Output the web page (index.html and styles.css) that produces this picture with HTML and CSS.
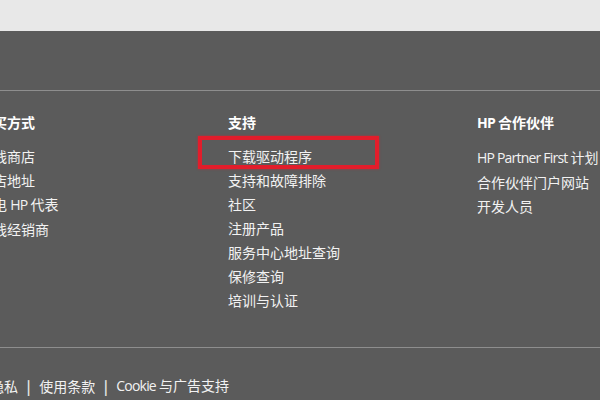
FILE: index.html
```html
<!DOCTYPE html>
<html lang="zh-CN">
<head>
<meta charset="utf-8">
<link rel="stylesheet" href="styles.css">
</head>
<body>
<div class="topband"></div>
<footer class="footer">
  <div class="cols">
    <div class="col">
      <h3 class="head">购买方式</h3>
      <ul class="list">
        <li>在线商店</li>
        <li>门店地址</li>
        <li>致电 <span class="lat">HP</span> 代表</li>
        <li>在线经销商</li>
      </ul>
    </div>
    <div class="col">
      <h3 class="head">支持</h3>
      <ul class="list">
        <li class="marked">下载驱动程序</li>
        <li>支持和故障排除</li>
        <li>社区</li>
        <li>注册产品</li>
        <li>服务中心地址查询</li>
        <li>保修查询</li>
        <li>培训与认证</li>
      </ul>
    </div>
    <div class="col">
      <h3 class="head"><span class="lat">HP</span> 合作伙伴</h3>
      <ul class="list">
        <li><span class="lat">HP Partner First</span> 计划</li>
        <li>合作伙伴门户网站</li>
        <li>开发人员</li>
      </ul>
    </div>
  </div>
  <div class="legal">
    <span>隐私</span><span class="sep">|</span><span>使用条款</span><span class="sep">|</span><span><span class="lat">Cookie</span> 与广告支持</span>
  </div>
</footer>
</body>
</html>
```
FILE: styles.css
```css
html, body {
  margin: 0;
  padding: 0;
  background: #5b5b5b;
  overflow: hidden;
}
body {
  width: 600px;
  height: 400px;
  font-family: "Noto Sans CJK SC", "Lato", sans-serif;
  color: #f2f2f2;
  font-size: 14px;
}
.topband {
  height: 31px;
  background: #e8e8e8;
}
.footer {
  padding-top: 59px;
}
.cols {
  border-top: 1px solid #8e8e8e;
  display: flex;
  margin-left: -21px;
  padding-top: 19px;
  padding-bottom: 35px;
  border-bottom: 1px solid #8e8e8e;
  width: 621px;
}
.col {
  width: 249px;
  flex: none;
}
.head {
  margin: 0;
  font-size: 14px;
  font-weight: bold;
  line-height: 24px;
  color: #ffffff;
  white-space: nowrap;
}
.list {
  list-style: none;
  margin: 10px 0 0;
  padding: 0;
}
.list li {
  line-height: 24px;
  white-space: nowrap;
}
.lat {
  font-family: "Open Sans", sans-serif;
  letter-spacing: -0.8px;
}
.head .lat {
  letter-spacing: -0.8px;
}
.marked {
  position: relative;
}
.marked::after {
  content: "";
  position: absolute;
  left: -30px;
  top: -8px;
  width: 173px;
  height: 25px;
  border: 4px solid #e21d2b;
  box-shadow: 0 0 2px rgba(226, 29, 43, 0.7);
}
.legal {
  display: flex;
  align-items: center;
  margin-left: -10px;
  padding-top: 25px;
  line-height: 24px;
  white-space: nowrap;
}
.sep {
  margin: 0 8.5px;
  font-weight: bold;
  color: #e6e6e6;
}
```
